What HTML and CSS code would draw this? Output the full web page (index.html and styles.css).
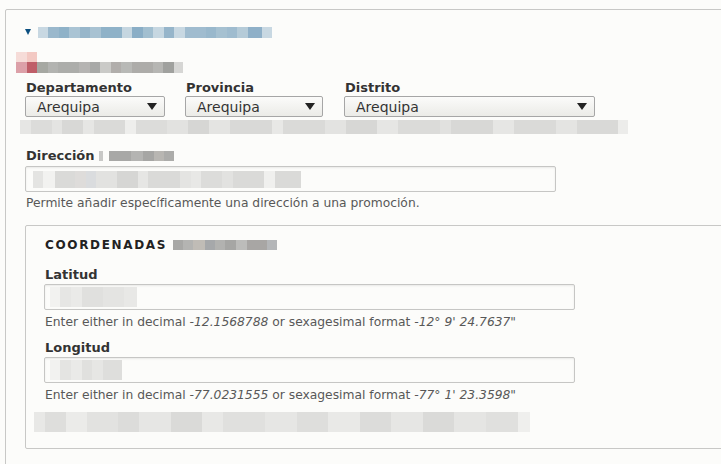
FILE: index.html
```html
<!DOCTYPE html>
<html lang="es">
<head>
<meta charset="utf-8">
<title>Ubicación</title>
<link rel="stylesheet" href="styles.css">
</head>
<body>
<div class="fieldset outer">
  <div class="summary">
    <span class="tri"></span>
    <span class="blur blur-summary"></span>
  </div>
  <div class="blur-label">
    <span class="blur blur-label-top"></span>
    <span class="blur blur-label-bottom"></span>
  </div>
  <div class="selects">
    <div class="sel-item sel-dep">
      <label class="lbl">Departamento</label>
      <div class="select"><span>Arequipa</span><span class="caret"></span></div>
    </div>
    <div class="sel-item sel-prov">
      <label class="lbl">Provincia</label>
      <div class="select"><span>Arequipa</span><span class="caret"></span></div>
    </div>
    <div class="sel-item sel-dist">
      <label class="lbl">Distrito</label>
      <div class="select"><span>Arequipa</span><span class="caret"></span></div>
    </div>
  </div>
  <div class="blur blur-row"></div>

  <div class="field field-dir">
    <label class="lbl">Dirección <span class="blur blur-dir"></span></label>
    <div class="input wide"><span class="blur blur-input-dir"></span></div>
    <div class="desc">Permite añadir específicamente una dirección a una promoción.</div>
  </div>

  <div class="fieldset inner">
    <div class="legend">COORDENADAS <span class="blur blur-coord"></span></div>
    <div class="field">
      <label class="lbl">Latitud</label>
      <div class="input wide"><span class="blur blur-lat"></span></div>
      <div class="desc">Enter either in decimal <em>-12.1568788</em> or sexagesimal format <em>-12° 9' 24.7637"</em></div>
    </div>
    <div class="field">
      <label class="lbl">Longitud</label>
      <div class="input wide"><span class="blur blur-lon"></span></div>
      <div class="desc">Enter either in decimal <em>-77.0231555</em> or sexagesimal format <em>-77° 1' 23.3598"</em></div>
    </div>
    <div class="blur blur-bottom"></div>
  </div>
</div>
</body>
</html>
```

FILE: styles.css
```css
html, body {
  margin: 0;
  padding: 0;
  background: #fcfcfa;
  overflow: hidden;
}
body {
  width: 721px;
  height: 464px;
  font-family: "DejaVu Sans", Verdana, sans-serif;
  color: #333;
}
.fieldset {
  border: 1px solid #c8c8c6;
  border-radius: 2px;
  box-sizing: border-box;
}
.outer {
  margin: 9px 0 0 5px;
  width: 760px;
  height: 520px;
  padding: 14px 0 0 19px;
}
.summary {
  display: flex;
  align-items: center;
  height: 16px;
}
.tri {
  width: 0;
  height: 0;
  border-left: 3.5px solid transparent;
  border-right: 3.5px solid transparent;
  border-top: 6px solid #0b4f80;
  margin-right: 7px;
}
.blur { display: inline-block; }
.blur-summary {
  width: 234px;
  height: 11px;
  background: linear-gradient(90deg,
    #c8d8e2 0 10px, #9ab8cc 10px 21px, #8fb2c8 21px 31px, #aac4d4 31px 42px,
    #97b6ca 42px 52px, #a8c2d2 52px 63px, #8fb2c8 63px 84px, #c5d6e0 84px 94px,
    #8aaec6 94px 105px, #a2bfd0 105px 115px, #c6d7e1 115px 126px, #96b5ca 126px 136px,
    #c8d8e2 136px 147px, #a0bccf 147px 168px, #99b8cc 168px 178px, #a6c1d1 178px 189px,
    #9fbccf 189px 199px, #b5cbd8 199px 210px, #8fb0c8 210px 224px, #c8d8e2 224px 234px);
}
.blur-label {
  margin: 12px 0 0 -9px;
  display: flex;
  flex-direction: column;
}
.blur-label-top {
  width: 21px;
  height: 10px;
  background: linear-gradient(90deg, #f6dcd8 0 11px, #f3c9c3 11px 21px);
}
.blur-label-bottom {
  width: 167px;
  height: 11px;
  background: linear-gradient(90deg,
    #dca0a8 0 11px, #bf5e68 11px 21px, #a6a8a2 21px 32px, #b2b3b0 32px 42px,
    #acadaa 42px 63px, #b5b4b2 63px 74px, #a8a9a7 74px 84px, #cacac7 84px 95px,
    #b1aeab 95px 105px, #b8b9b6 105px 116px, #adaca9 116px 137px, #b6b6b3 137px 147px,
    #a0a19e 147px 158px, #d6d6d4 158px 167px);
}
.selects {
  display: flex;
  margin-top: 7px;
}
.sel-item { display: flex; flex-direction: column; }
.sel-dep { width: 140px; margin-right: 20px; }
.sel-prov { width: 138px; margin-right: 21px; }
.sel-dist { width: 251px; }
.lbl {
  display: block;
  font-weight: bold;
  font-size: 13px;
  line-height: 16px;
  color: #333;
  margin-left: 1px;
}
.select {
  box-sizing: border-box;
  height: 21px;
  margin-top: 0;
  border: 1px solid #a6a6a6;
  border-radius: 2px;
  background: linear-gradient(#fbfbfa, #ebebe7);
  display: flex;
  align-items: center;
  justify-content: space-between;
  padding: 0 5px 0 11px;
  font-size: 14px;
  color: #333;
}
.caret {
  width: 0;
  height: 0;
  border-left: 5px solid transparent;
  border-right: 5px solid transparent;
  border-top: 7px solid #222;
  margin-right: 2px;
}
.blur-row {
  display: block;
  margin: 3px 0 0 -5px;
  width: 608px;
  height: 14px;
  background: linear-gradient(90deg,
    #e6e6e4 0 11px, #dcdcda 11px 32px, #e4e4e2 32px 42px, #d8d8d6 42px 63px,
    #e6e6e4 63px 74px, #dadad8 74px 105px, #eeeeec 105px 116px, #dcdcda 116px 147px,
    #e2e2e0 147px 168px, #d6d6d4 168px 189px, #e4e4e2 189px 210px, #d9d9d7 210px 252px,
    #e8e8e6 252px 263px, #dadad8 263px 305px, #e3e3e1 305px 326px, #d7d7d5 326px 357px,
    #e6e6e4 357px 378px, #dbdbd9 378px 420px, #e1e1df 420px 431px, #d8d8d6 431px 473px,
    #e6e6e4 473px 494px, #dadad8 494px 536px, #e4e4e2 536px 557px, #d9d9d7 557px 598px,
    #ececea 598px 608px);
}
.field-dir { margin-top: 14px; }
.blur-dir {
  width: 75px;
  height: 10px;
  vertical-align: -1px;
  background: linear-gradient(90deg, #c8c8c6 0 4px, #fcfcfa 4px 10px, #a8a8a6 10px 32px, #b4b4b2 32px 44px, #a6a6a4 44px 55px, #b8b6b2 55px 65px, #acacaa 65px 75px);
}
.input {
  box-sizing: border-box;
  height: 26px;
  margin-top: 2px;
  border: 1px solid #c6c6c4;
  border-radius: 2px;
  background: #fcfcfa;
  box-shadow: inset 0 1px 2px rgba(0,0,0,0.08);
  display: flex;
  align-items: center;
  padding-left: 5px;
}
.field-dir .wide { width: 531px; }
.blur-input-dir {
  width: 268px;
  height: 17px;
  margin-left: 2px;
  background: linear-gradient(90deg,
    #e4e4e2 0 10px, #f2f2f0 10px 22px, #dadad8 22px 42px, #dedcda 42px 53px,
    #dadcde 53px 63px, #e2e2e0 63px 84px, #d6d6d4 84px 105px, #e6e6e4 105px 115px,
    #dadad8 115px 147px, #e4e4e2 147px 158px, #e8e8e6 158px 168px, #dcdcda 168px 189px,
    #e2e2e0 189px 200px, #dadad8 200px 231px, #f0f0ee 231px 242px, #dadad8 242px 268px);
}
.desc {
  font-size: 12.3px;
  line-height: 15px;
  color: #585858;
  margin-top: 5px;
  margin-left: 1px;
}
.field-dir .desc { margin-top: 4px; }
.desc em { font-style: italic; }
.inner {
  margin-top: 14px;
  width: 720px;
  height: 224px;
  padding: 11px 0 0 18px;
}
.legend {
  font-weight: bold;
  font-size: 12px;
  line-height: 16px;
  letter-spacing: 1.65px;
  color: #222;
  margin-left: 1px;
}
.blur-coord {
  width: 104px;
  height: 10px;
  vertical-align: -1px;
  letter-spacing: 0;
  background: linear-gradient(90deg, #a8a8a6 0 10px, #b4b4b2 10px 20px, #c0bcb6 20px 32px, #a6a8aa 32px 42px, #b2b2b0 42px 52px, #a6a6a4 52px 63px, #bcbcba 63px 74px, #a8a6a4 74px 94px, #b4b6b8 94px 104px);
}
.inner .field { margin-top: 14px; }
.inner .field + .field { margin-top: 10px; }
.inner .input { margin-top: 1px; }
.inner .wide { width: 531px; }
.blur-lat {
  width: 87px;
  height: 20px;
  background: linear-gradient(90deg, #f2f2f0 0 10px, #e6e6e4 10px 21px, #eaeae8 21px 32px, #e0e0de 32px 53px, #e4e4e2 53px 74px, #e8e8e6 74px 87px);
}
.blur-lon {
  width: 72px;
  height: 20px;
  background: linear-gradient(90deg, #f2f2f0 0 10px, #e4e4e2 10px 21px, #eaeae8 21px 32px, #e0e0de 32px 42px, #e6e6e4 42px 53px, #dededc 53px 72px);
}
.blur-bottom {
  display: block;
  margin: 9px 0 0 -10px;
  width: 496px;
  height: 20px;
  background:
    linear-gradient(90deg,
      #e8e8e6 0 11px, #dededc 11px 32px, #ebebe9 32px 53px, #e2e2e0 53px 84px,
      #dcdcda 84px 105px, #e6e6e4 105px 137px, #dadad8 137px 168px, #e8e8e6 168px 189px,
      #e0e0de 189px 231px, #e6e6e4 231px 263px, #dededc 263px 294px, #e9e9e7 294px 326px,
      #dcdcda 326px 357px, #e6e6e4 357px 389px, #dadad8 389px 420px, #e5e5e3 420px 452px,
      #e0e0de 452px 484px, #efefed 484px 496px);
}
```
